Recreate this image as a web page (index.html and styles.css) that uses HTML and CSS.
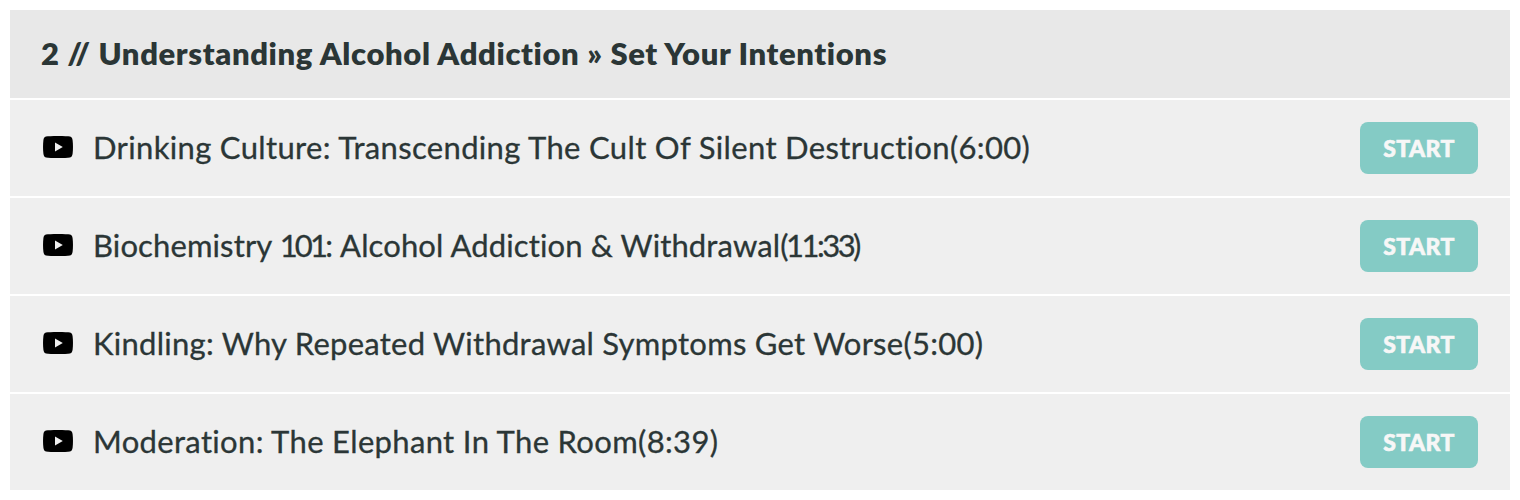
FILE: index.html
```html
<!DOCTYPE html>
<html lang="en">
<head>
<meta charset="utf-8">
<title>Course curriculum</title>
<link rel="stylesheet" href="styles.css">
</head>
<body>
<svg class="sprite" aria-hidden="true"><symbol id="video" viewBox="0 0 30 22"><path fill-rule="evenodd" d="M15 0C21 0 25.300.2 27 .6 28.700 1 29.300 2.200 29.600 4.200 30.100 8 30.100 14 29.600 17.800 29.300 19.800 28.700 21 27 21.400 23 22.200 7 22.200 3 21.400 1.300 21 .7 19.800 .4 17.800-.1 14-.1 8 .4 4.200 .7 2.200 1.300 1 3 .6 4.700.2 9 0 15 0ZM12 6.500V15.500L19.800 11Z"/></symbol></svg>
<main class="section">
<h2 class="section-title">2 // Understanding Alcohol Addiction » Set Your Intentions</h2>
<ul class="lectures">
<li class="lecture"><svg class="icon"><use href="#video"/></svg><span class="name">Drinking Culture: Transcending The Cult Of Silent Destruction(6:00)</span><a class="start">START</a></li>
<li class="lecture"><svg class="icon"><use href="#video"/></svg><span class="name name-biochemistry">Biochemistry <span class="course-number">101</span>: Alcohol Addiction &amp; Withdrawal<span class="duration-narrow">(11:33)</span></span><a class="start">START</a></li>
<li class="lecture"><svg class="icon"><use href="#video"/></svg><span class="name name-kindling">Kindling: Why Repeated Withdrawal Symptoms Get Worse(5:00)</span><a class="start">START</a></li>
<li class="lecture"><svg class="icon"><use href="#video"/></svg><span class="name">Moderation: The Elephant In The Room(8:39)</span><a class="start">START</a></li>
</ul>
</main>
</body>
</html>
```

FILE: styles.css
```css
* { box-sizing: border-box; }
body { margin: 0; padding: 10px; background: #fff; color: #2b3636; font-family: Lato, sans-serif; font-variant-ligatures: none; }
.sprite { display: none; }
.section-title { margin: 0; height: 88px; padding: 0 31px 3px; display: flex; align-items: center; background: #e8e8e8; font-size: 31px; font-weight: 800; line-height: 40px; letter-spacing: .61px; white-space: nowrap; }
.lectures { list-style: none; margin: 0; padding: 0; }
.lecture { height: 96px; margin-top: 2px; padding: 0 32px 0 33px; display: flex; align-items: center; background: #efefef; font-size: 31px; line-height: 40px; white-space: nowrap; }
.icon { width: 30px; height: 22px; margin: 0 20px 2px 0; fill: #000; }
.name { padding-bottom: 3px; letter-spacing: .34px; -webkit-text-stroke: .3px currentColor; }
.name-biochemistry { letter-spacing: .12px; }
.name-kindling { letter-spacing: .26px; }
.course-number { letter-spacing: -2.8px; }
.duration-narrow { letter-spacing: -2.5px; }
.start { margin-left: auto; padding-bottom: 1px; width: 118px; height: 52px; display: flex; align-items: center; justify-content: center; border-radius: 8px; background: #84cbc5; color: #f7f7f7; font-size: 23px; font-weight: 900; letter-spacing: .4px; -webkit-text-stroke: .6px currentColor; }
```
